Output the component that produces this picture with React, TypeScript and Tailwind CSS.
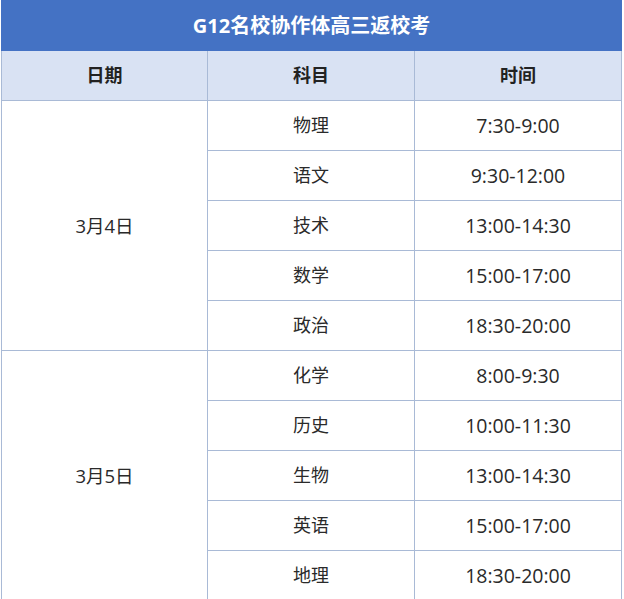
import React from "react";

const days = [
  {
    date: "3月4日",
    rows: [
      ["物理", "7:30-9:00"],
      ["语文", "9:30-12:00"],
      ["技术", "13:00-14:30"],
      ["数学", "15:00-17:00"],
      ["政治", "18:30-20:00"],
    ],
  },
  {
    date: "3月5日",
    rows: [
      ["化学", "8:00-9:30"],
      ["历史", "10:00-11:30"],
      ["生物", "13:00-14:30"],
      ["英语", "15:00-17:00"],
      ["地理", "18:30-20:00"],
    ],
  },
];

const cell = "border border-[#a9bad6] text-center align-middle h-[50px] p-0";

export default function App() {
  return (
    <div
      className="w-[624px] h-[599px] overflow-hidden bg-white pl-px text-[#2a2a2a]"
      style={{ fontFamily: '"Open Sans", "Noto Sans CJK SC", sans-serif' }}
    >
      <table className="w-[620px] border-collapse table-fixed">
        <colgroup>
          <col className="w-[206px]" />
          <col className="w-[207px]" />
          <col className="w-[207px]" />
        </colgroup>
        <thead>
          <tr>
            <th
              colSpan={3}
              className="h-[50px] bg-[#4472c4] border border-[#4472c4] text-white text-[20px] font-bold text-center"
            >
              G12名校协作体高三返校考
            </th>
          </tr>
          <tr className="bg-[#d9e2f3]">
            <th className={`${cell} text-[18px] font-bold text-[#222]`}>日期</th>
            <th className={`${cell} text-[18px] font-bold text-[#222]`}>科目</th>
            <th className={`${cell} text-[18px] font-bold text-[#222]`}>时间</th>
          </tr>
        </thead>
        <tbody>
          {days.map((d) =>
            d.rows.map(([subject, time], i) => (
              <tr key={d.date + subject}>
                {i === 0 && (
                  <td rowSpan={d.rows.length} className={`${cell} text-[18.5px]`}>
                    {d.date}
                  </td>
                )}
                <td className={`${cell} text-[18px]`}>{subject}</td>
                <td className={`${cell} text-[19.5px]`}>{time}</td>
              </tr>
            ))
          )}
        </tbody>
      </table>
    </div>
  );
}
